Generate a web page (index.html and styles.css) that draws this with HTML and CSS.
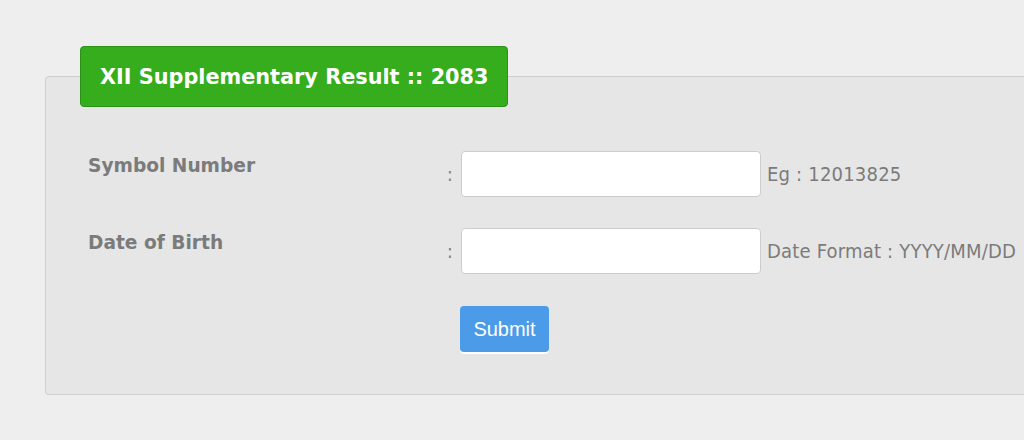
FILE: index.html
```html
<!DOCTYPE html>
<html>
<head>
<meta charset="utf-8">
<link rel="stylesheet" href="styles.css">
</head>
<body>
<form class="result-form">
  <fieldset class="panel">
    <legend class="panel-title">XII Supplementary Result :: 2083</legend>
    <div class="row">
      <label class="label" for="symbol">Symbol Number</label>
      <span class="colon">:</span>
      <input class="field" id="symbol" type="text">
      <span class="hint">Eg : 12013825</span>
    </div>
    <div class="row">
      <label class="label" for="dob">Date of Birth</label>
      <span class="colon">:</span>
      <input class="field" id="dob" type="text">
      <span class="hint">Date Format : YYYY/MM/DD</span>
    </div>
    <div class="row actions">
      <button class="submit" type="button">Submit</button>
    </div>
  </fieldset>
</form>
</body>
</html>
```

FILE: styles.css
```css
html, body {
  margin: 0;
  padding: 0;
  background: #eeeeee;
  overflow: hidden;
}
body {
  width: 1024px;
  height: 440px;
  font-family: "DejaVu Sans", Verdana, sans-serif;
}
.result-form {
  padding-top: 46px;
  padding-left: 45px;
}
.panel {
  width: 1040px;
  margin: 0;
  padding: 0 0 42px 42px;
  border: 1px solid #cfcfcf;
  border-radius: 4px;
  background: #e6e6e6;
  box-sizing: border-box;
  min-width: 0;
}
.panel-title {
  margin-left: -8px;
  padding: 0 18px 0 19px;
  height: 59px;
  line-height: 61px;
  background: #35ad1c;
  border: 1px solid #2a9214;
  border-radius: 4px;
  color: #ffffff;
  font-weight: bold;
  font-size: 20.8px;
  box-sizing: content-box;
}
.row {
  display: flex;
  align-items: flex-start;
  margin-top: 31px;
}
.row:first-of-type {
  margin-top: 44px;
}
.label {
  flex: 0 0 359px;
  padding-top: 4px;
  font-weight: bold;
  font-size: 18.6px;
  color: #7b7b7b;
}
.colon {
  width: 14px;
  margin-top: 12px;
  font-family: "DejaVu Sans Condensed", "DejaVu Sans", sans-serif;
  font-size: 19px;
  color: #808080;
}
.field {
  width: 300px;
  height: 46px;
  margin: 0;
  border: 1px solid #cccccc;
  border-radius: 4px;
  background: #ffffff;
  box-sizing: border-box;
}
.hint {
  margin-left: 6px;
  margin-top: 11px;
  white-space: nowrap;
  font-family: "DejaVu Sans Condensed", "DejaVu Sans", sans-serif;
  font-size: 20px;
  letter-spacing: 0.2px;
  color: #7b7b7b;
}
.actions {
  padding-left: 372px;
}
.submit {
  width: 89px;
  height: 46px;
  margin-top: 1px;
  border: 0;
  border-radius: 4px;
  background: #4c9be8;
  color: #ffffff;
  font-family: "Liberation Sans", Arial, sans-serif;
  font-size: 20px;
  box-shadow: 0 2px 0 #ffffff;
}
```
